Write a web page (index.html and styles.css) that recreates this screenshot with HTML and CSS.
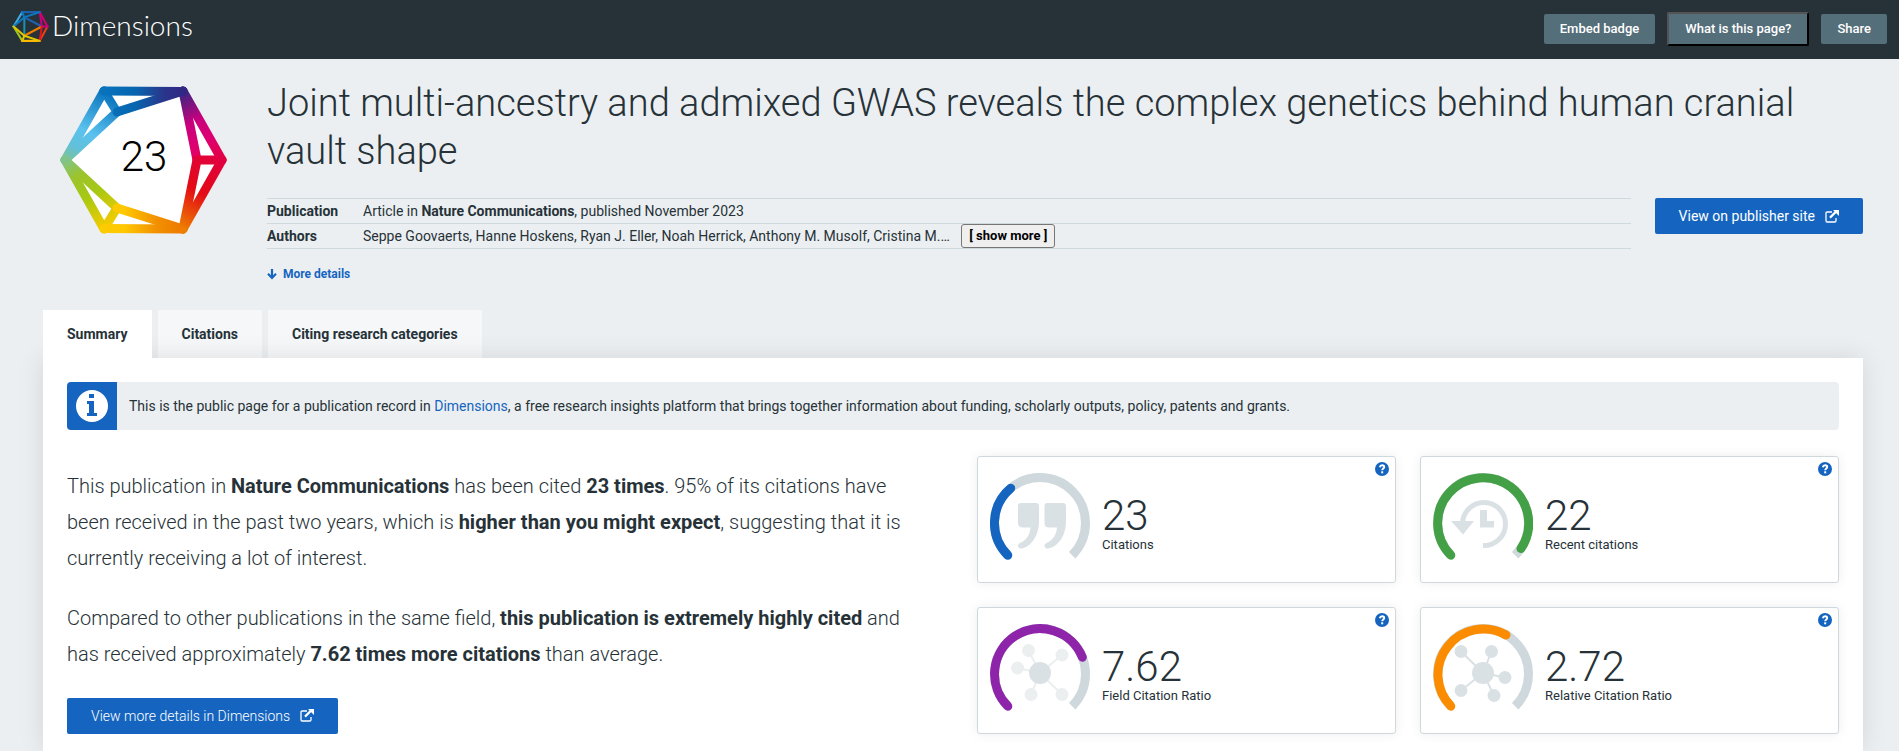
FILE: index.html
```html
<!DOCTYPE html>
<html lang="en">
<head>
    <meta charset="UTF-8">
    <meta name="viewport" content="width=device-width, initial-scale=1.0">
    <title>Joint multi-ancestry and admixed GWAS - Dimensions Badge</title>
    <link rel="stylesheet" href="styles.css">
</head>
<body>

    <!-- Shared SVG definitions -->
    <svg class="defs" width="0" height="0" aria-hidden="true">
        <symbol id="icon-external" viewBox="0 0 14 13">
            <path d="M7 2H2.200Q1 2 1 3.200V10.800Q1 12 2.200 12H9.800Q11 12 11 10.800V8" fill="none" stroke="currentColor" stroke-width="1.300"/>
            <path d="M5 7.600L11 1.600" fill="none" stroke="currentColor" stroke-width="2.200"/>
            <path d="M8 0H14V6Z" fill="currentColor"/>
        </symbol>
        <symbol id="icon-help" viewBox="0 0 14 14">
            <circle cx="7" cy="7" r="7" fill="#1565c0"/>
            <path d="M4.800 5.200C5.100 3.800 6 3.300 7.100 3.300C8.400 3.300 9.200 4 9.200 5C9.200 6.500 7.200 6.500 7.200 8.300" fill="none" stroke="#fff" stroke-width="1.900"/>
            <rect x="6.200" y="9.300" width="2" height="2" fill="#fff"/>
        </symbol>
    </svg>

    <!-- Top Bar -->
    <header class="topbar">
        <a class="logo" href="#">
            <svg class="logo-mark" viewBox="0 0 36 32" aria-hidden="true">
                <g fill="none" stroke-linecap="round" stroke-width="2">
                    <path d="M10 2L1.500 16" stroke="#3fa9dd"/>
                    <path d="M1.500 16L10 30" stroke="#a2c617"/>
                    <path d="M10 30H27" stroke="#fbb900"/>
                    <path d="M27 30L34.500 16" stroke="#e8401c"/>
                    <path d="M34.500 16L27 2" stroke="#d4006e"/>
                    <path d="M27 2H10" stroke="#1b5fae"/>
                    <path d="M12 7V25" stroke="#1b8fb0"/>
                    <path d="M12 7L29 16" stroke="#2360ac"/>
                    <path d="M12 25L29 16" stroke="#ee7d00"/>
                    <path d="M27 2L29 16L34.500 16" stroke="#c8007e"/>
                    <path d="M27 30L29 16" stroke="#e2141d"/>
                    <path d="M10 2L12 7L27 2M1.500 16L12 7" stroke="#0b78bf"/>
                    <path d="M1.500 16L12 25L10 30M12 25L27 30" stroke="#dfc800"/>
                </g>
            </svg>
            <span class="logo-text">Dimensions</span>
        </a>
        <nav class="topbar-nav">
            <a class="top-btn" href="#">Embed badge</a>
            <button class="top-btn top-btn-raised" type="button">What is this page?</button>
            <a class="top-btn" href="#">Share</a>
        </nav>
    </header>

    <main class="page">
        <!-- Publication Header -->
        <section class="publication">
            <div class="badge">
                <svg class="badge-shape" viewBox="0 0 168 148" aria-hidden="true">
                    <defs>
                        <linearGradient id="g-top" x1="44" x2="124" y1="0" y2="0" gradientUnits="userSpaceOnUse"><stop offset="0" stop-color="#0873bd"/><stop offset=".4" stop-color="#0765af"/><stop offset=".75" stop-color="#29358b"/><stop offset="1" stop-color="#312783"/></linearGradient>
                        <linearGradient id="g-tl" x1="44" x2="5" y1="5" y2="74" gradientUnits="userSpaceOnUse"><stop offset="0" stop-color="#0873bd"/><stop offset=".55" stop-color="#5bc2ee"/><stop offset=".8" stop-color="#62c0d8"/><stop offset="1" stop-color="#7fc48f"/></linearGradient>
                        <linearGradient id="g-bl" x1="5" x2="44" y1="74" y2="143" gradientUnits="userSpaceOnUse"><stop offset="0" stop-color="#80c38c"/><stop offset=".25" stop-color="#9bc42d"/><stop offset=".55" stop-color="#a8c813"/><stop offset="1" stop-color="#f7cb00"/></linearGradient>
                        <linearGradient id="g-bottom" x1="44" x2="124" y1="0" y2="0" gradientUnits="userSpaceOnUse"><stop offset="0" stop-color="#fccb00"/><stop offset=".25" stop-color="#ffc800"/><stop offset=".65" stop-color="#f29100"/><stop offset="1" stop-color="#ee7800"/></linearGradient>
                        <linearGradient id="g-br" x1="124" x2="162" y1="143" y2="74" gradientUnits="userSpaceOnUse"><stop offset="0" stop-color="#ee7d00"/><stop offset=".5" stop-color="#e30c15"/><stop offset="1" stop-color="#e1003f"/></linearGradient>
                        <linearGradient id="g-tr" x1="124" x2="162" y1="5" y2="74" gradientUnits="userSpaceOnUse"><stop offset="0" stop-color="#352781"/><stop offset=".4" stop-color="#c8007d"/><stop offset=".7" stop-color="#df0070"/><stop offset="1" stop-color="#e1003f"/></linearGradient>
                    </defs>
                    <path d="M44 5H123L162 74L123 143H44L5 74Z" fill="#fff"/>
                    <g fill="none" stroke-width="9" stroke-linecap="round" stroke-linejoin="round">
                        <path d="M5 74L57 26L44 5" stroke="url(#g-tl)"/>
                        <path d="M57 26L123 5" stroke="url(#g-top)"/>
                        <path d="M5 74L57 122L44 143" stroke="url(#g-bl)"/>
                        <path d="M57 122L123 143" stroke="url(#g-bottom)"/>
                        <path d="M123 5L137 74" stroke="url(#g-tr)"/>
                        <path d="M123 143L137 74L162 74" stroke="url(#g-br)"/>
                        <path d="M44 5L5 74" stroke="url(#g-tl)"/>
                        <path d="M5 74L44 143" stroke="url(#g-bl)"/>
                        <path d="M44 142.500L123 143" stroke="url(#g-bottom)"/>
                        <path d="M123 143L162 74" stroke="url(#g-br)"/>
                        <path d="M123 5L162 74" stroke="url(#g-tr)"/>
                        <path d="M44 5L123 5.500" stroke="url(#g-top)"/>
                    </g>
                </svg>
                <span class="badge-score">23</span>
            </div>

            <div class="publication-info">
                <h1>Joint multi-ancestry and admixed GWAS reveals the complex genetics behind human cranial vault shape</h1>
                <div class="publication-body">
                    <div class="publication-details">
                        <table class="details-table">
                            <tbody>
                                <tr>
                                    <th scope="row">Publication</th>
                                    <td>Article in <strong>Nature Communications</strong>, published November 2023</td>
                                </tr>
                                <tr>
                                    <th scope="row">Authors</th>
                                    <td>Seppe Goovaerts, Hanne Hoskens, Ryan J. Eller, Noah Herrick, Anthony M. Musolf, Cristina M.… <button class="show-more" type="button">[ show more ]</button></td>
                                </tr>
                            </tbody>
                        </table>
                        <a class="more-details" href="#">
                            <svg width="10" height="11" viewBox="0 0 10 11" aria-hidden="true"><path d="M5 0V9M1 4.800L5 9L9 4.800" fill="none" stroke="currentColor" stroke-width="2.200"/></svg>
                            More details
                        </a>
                    </div>
                    <a class="btn" href="#">View on publisher site <svg class="btn-icon" aria-hidden="true"><use href="#icon-external"/></svg></a>
                </div>
            </div>
        </section>

        <!-- Tabs -->
        <nav class="tabs">
            <a class="tab active" href="#">Summary</a>
            <a class="tab" href="#">Citations</a>
            <a class="tab" href="#">Citing research categories</a>
        </nav>

        <!-- Summary Panel -->
        <section class="panel">
            <div class="info-bar">
                <div class="info-icon">
                    <svg width="32" height="32" viewBox="0 0 32 32" aria-hidden="true">
                        <circle cx="16" cy="16" r="16" fill="#fff"/>
                        <path d="M13 4H18V8H13ZM11 11H18V23H21V26H11V23H13V14H11Z" fill="#1565c0"/>
                    </svg>
                </div>
                <p>This is the public page for a publication record in <a href="#">Dimensions</a>, a free research insights platform that brings together information about funding, scholarly outputs, policy, patents and grants.</p>
            </div>

            <div class="summary">
                <div class="summary-text">
                    <p>This publication in <strong>Nature Communications</strong> has been cited <strong>23 times</strong>. 95% of its citations have been received in the past two years, which is <strong>higher than you might expect</strong>, suggesting that it is currently receiving a lot of interest.</p>
                    <p>Compared to other publications in the same field, <strong>this publication is extremely highly cited</strong> and has received approximately <strong>7.62 times more citations</strong> than average.</p>
                    <a class="btn" href="#">View more details in Dimensions <svg class="btn-icon" aria-hidden="true"><use href="#icon-external"/></svg></a>
                </div>

                <div class="metrics">
                    <div class="metric">
                        <svg class="gauge" viewBox="0 0 100 100" aria-hidden="true">
                            <path class="track" d="M17.800 82.200A45.500 45.500 0 1 1 82.200 82.200"/>
                            <path class="value citations" d="M17.800 82.200A45.500 45.500 0 0 1 20.700 15.200"/>
                            <path d="M31 30H46Q49 30 49 33V48C49 64 40 74 32 75.500C28 76 26.500 71.500 30 70C37 67 40 61 40.500 54.500H33Q28 54.500 28 50V33Q28 30 31 30ZM57.500 30H72.500Q76 30 76 33V48C76 64 67 74 58.500 75.500C54.500 76 53 71.500 56.500 70C63.500 67 66.500 61 67 54.500H59Q54.500 54.500 54.500 50V33Q54.500 30 57.500 30Z" fill="#dae1e4"/>
                        </svg>
                        <div class="metric-text">
                            <span class="metric-value">23</span>
                            <span class="metric-label">Citations</span>
                        </div>
                        <button class="help" type="button" aria-label="About citations"><svg><use href="#icon-help"/></svg></button>
                    </div>

                    <div class="metric">
                        <svg class="gauge" viewBox="0 0 100 100" aria-hidden="true">
                            <path class="track" d="M17.800 82.200A45.500 45.500 0 1 1 82.200 82.200"/>
                            <path class="value recent" d="M17.800 82.200A45.500 45.500 0 1 1 88 75.500"/>
                            <path d="M29.500 50A21.500 21.500 0 1 1 50 72.500" fill="none" stroke="#dae1e4" stroke-width="5"/>
                            <path d="M18 48H41L30 61.500ZM47 37H54V48H61V54.500H47Z" fill="#dae1e4"/>
                        </svg>
                        <div class="metric-text">
                            <span class="metric-value">22</span>
                            <span class="metric-label">Recent citations</span>
                        </div>
                        <button class="help" type="button" aria-label="About recent citations"><svg><use href="#icon-help"/></svg></button>
                    </div>

                    <div class="metric">
                        <svg class="gauge" viewBox="0 0 100 100" aria-hidden="true">
                            <path class="track" d="M17.800 82.200A45.500 45.500 0 1 1 82.200 82.200"/>
                            <path class="value field" d="M17.800 82.200A45.500 45.500 0 1 1 92.300 33.200"/>
                            <path d="M50 49L38.500 26.500M50 49L72 31M50 49L27.500 44M50 49L41 70.500M50 49L72 70.500" stroke="#ebefef" stroke-width="2"/>
                            <g fill="#ebefef"><circle cx="38.500" cy="26.500" r="6.500"/><circle cx="72" cy="31" r="6.500"/><circle cx="27.500" cy="44" r="6.500"/><circle cx="41" cy="70.500" r="6.500"/><circle cx="72" cy="70.500" r="6.500"/></g>
                            <circle cx="50" cy="49" r="11" fill="#dae1e4"/>
                        </svg>
                        <div class="metric-text">
                            <span class="metric-value">7.62</span>
                            <span class="metric-label">Field Citation Ratio</span>
                        </div>
                        <button class="help" type="button" aria-label="About field citation ratio"><svg><use href="#icon-help"/></svg></button>
                    </div>

                    <div class="metric">
                        <svg class="gauge" viewBox="0 0 100 100" aria-hidden="true">
                            <path class="track" d="M17.800 82.200A45.500 45.500 0 1 1 82.200 82.200"/>
                            <path class="value relative" d="M17.800 82.200A45.500 45.500 0 0 1 73 11"/>
                            <path d="M50 49L28 27.500M50 49L58.500 27.500M50 49L72 53.500M50 49L61 71.500M50 49L28 66.500" stroke="#dae1e4" stroke-width="2"/>
                            <g fill="#dae1e4"><circle cx="28" cy="27.500" r="6.500"/><circle cx="58.500" cy="27.500" r="6.500"/><circle cx="72" cy="53.500" r="6.500"/><circle cx="61" cy="71.500" r="6.500"/><circle cx="28" cy="66.500" r="6.500"/><circle cx="50" cy="49" r="11"/></g>
                        </svg>
                        <div class="metric-text">
                            <span class="metric-value">2.72</span>
                            <span class="metric-label">Relative Citation Ratio</span>
                        </div>
                        <button class="help" type="button" aria-label="About relative citation ratio"><svg><use href="#icon-help"/></svg></button>
                    </div>
                </div>
            </div>
        </section>
    </main>

</body>
</html>
```
FILE: styles.css
```css
* {
    box-sizing: border-box;
}

body {
    margin: 0;
    min-height: 100vh;
    background: #eceff1;
    color: #263238;
    font-family: Roboto, "Liberation Sans", sans-serif;
    font-size: 14px;
    line-height: 24px;
    display: flex;
    flex-direction: column;
}

a {
    color: #1565c0;
    text-decoration: none;
}

.defs {
    display: none;
}

/* Top Bar */
.topbar {
    display: flex;
    justify-content: space-between;
    align-items: center;
    height: 59px;
    padding: 0 12px;
    background: #263238;
}

.logo {
    display: flex;
    align-items: center;
    gap: 3px;
    color: #fff;
    margin-bottom: 6px;
}

.logo-mark {
    width: 37px;
    height: 33px;
}

.logo-text {
    font-family: Lato, Roboto, sans-serif;
    font-size: 28px;
    font-weight: 300;
    line-height: 32px;
    padding-bottom: 4px;
}

.topbar-nav {
    display: flex;
    align-items: center;
    gap: 12px;
    margin-bottom: 2px;
}

.top-btn {
    padding: 3px 16px;
    background: #546e7a;
    border-radius: 2px;
    color: #fff;
    font-family: inherit;
    font-size: 13px;
    font-weight: 500;
    line-height: 24px;
}

.top-btn-raised {
    border: 2px outset #000;
    cursor: pointer;
}

/* Publication Header */
.page {
    display: flex;
    flex-direction: column;
    flex: 1;
    padding: 0 36px 0 43px;
}

.publication {
    display: flex;
    gap: 39px;
    padding-top: 20px;
}

.badge {
    display: grid;
    flex: none;
    place-items: center;
    align-self: flex-start;
    margin: 7px 0 0 17px;
}

.badge-shape,
.badge-score {
    grid-area: 1 / 1;
}

.badge-shape {
    width: 168px;
    height: 148px;
}

.badge-score {
    color: #000;
    font-size: 42px;
    font-weight: 300;
    line-height: 48px;
    padding-bottom: 6px;
}

.publication-info {
    flex: 1;
    min-width: 0;
}

h1 {
    margin: 0 0 23px;
    font-size: 38px;
    font-weight: 300;
    line-height: 48px;
}

.publication-body {
    display: flex;
    align-items: flex-start;
    gap: 24px;
}

.publication-details {
    flex: 1;
    min-width: 0;
}

.details-table {
    width: 100%;
    border-collapse: collapse;
}

.details-table th,
.details-table td {
    height: 25px;
    padding: 0;
    border-top: 1px solid #cfd8dc;
    border-bottom: 1px solid #cfd8dc;
    text-align: left;
}

.details-table th {
    width: 96px;
}

.show-more {
    height: 24px;
    margin-left: 8px;
    padding: 1px 7px;
    background: #efefef;
    border: 1px solid #767676;
    border-radius: 3px;
    color: #000;
    font: bold 13px/20px Roboto, sans-serif;
    cursor: pointer;
    vertical-align: top;
}

.more-details {
    display: inline-flex;
    align-items: center;
    gap: 6px;
    margin-top: 13px;
    font-size: 12px;
    font-weight: bold;
}

/* Buttons */
.btn {
    display: inline-flex;
    align-items: center;
    flex: none;
    gap: 10px;
    padding: 6px 24px;
    background: #1565c0;
    border-radius: 2px;
    color: #fff;
    font-size: 14px;
    line-height: 24px;
}

.btn-icon {
    width: 14px;
    height: 13px;
}

/* Tabs */
.tabs {
    display: flex;
    gap: 6px;
    margin-top: 23px;
}

.tab {
    padding: 12px 24px;
    background: #f5f7f8;
    color: #263238;
    font-weight: bold;
}

.tab.active {
    position: relative;
    z-index: 1;
    background: #fff;
}

/* Summary Panel */
.panel {
    flex: 1;
    padding: 24px 24px 17px;
    background: #fff;
    box-shadow: 0 0 24px rgba(0, 0, 0, 0.1);
}

.info-bar {
    display: flex;
    overflow: hidden;
    background: #eceff1;
    border-radius: 4px;
}

.info-icon {
    display: flex;
    align-items: center;
    justify-content: center;
    width: 50px;
    background: #1565c0;
}

.info-bar p {
    margin: 0;
    padding: 12px;
}

.summary {
    display: grid;
    grid-template-columns: 1fr 1fr;
    gap: 48px;
    margin-top: 26px;
}

.summary-text {
    padding: 12px 16px 0 0;
    font-size: 20px;
    font-weight: 300;
    line-height: 36px;
}

.summary-text p {
    margin: 0 0 24px;
}

.summary-text strong {
    font-weight: 700;
}

.summary-text .btn {
    margin-top: 2px;
}

.metrics {
    display: grid;
    grid-template-columns: 1fr 1fr;
    align-content: start;
    gap: 24px;
}

.metric {
    position: relative;
    display: flex;
    gap: 12px;
    padding: 16px 12px 9px;
    border: 1px solid #cfd8dc;
    border-radius: 3px;
    box-shadow: 0 0 12px rgba(0, 0, 0, 0.07);
}

.gauge {
    width: 100px;
    height: 100px;
}

.gauge .track {
    fill: none;
    stroke: #cfd8dc;
    stroke-width: 9;
}

.gauge .value {
    fill: none;
    stroke-width: 9;
    stroke-linecap: round;
}

.citations { stroke: #1565c0; }
.recent { stroke: #43a047; }
.field { stroke: #8e24aa; }
.relative { stroke: #fb8c00; }

.metric-text {
    display: flex;
    flex-direction: column;
    padding-top: 21px;
}

.metric-value {
    font-size: 42px;
    font-weight: 300;
    line-height: 44px;
}

.metric-label {
    font-size: 13px;
    line-height: 14px;
}

.help {
    position: absolute;
    top: 5px;
    right: 6px;
    padding: 0;
    border: none;
    background: none;
    line-height: 0;
    cursor: pointer;
}

.help svg {
    width: 14px;
    height: 14px;
}
```
